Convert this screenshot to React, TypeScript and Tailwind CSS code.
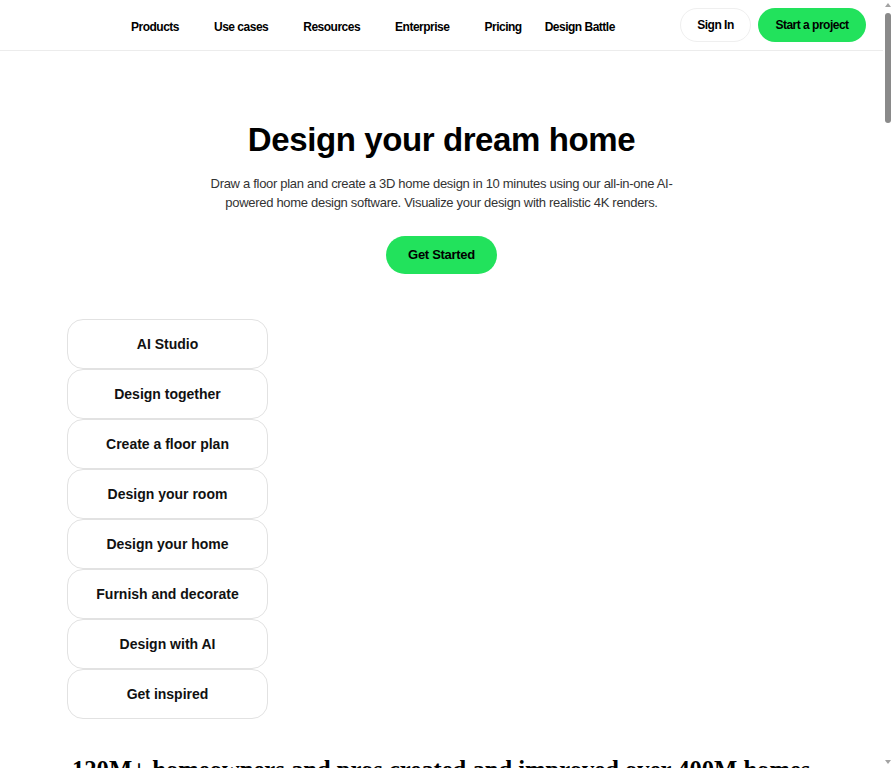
import React from 'react';

const navLinks = ['Products', 'Use cases', 'Resources', 'Enterprise', 'Pricing'];

const features = [
  'AI Studio',
  'Design together',
  'Create a floor plan',
  'Design your room',
  'Design your home',
  'Furnish and decorate',
  'Design with AI',
  'Get inspired',
];

const Header: React.FC = () => (
  <header className="h-[51px] border-b border-[#ececec] flex items-center pl-[131px] pr-[17px]">
    <nav className="mt-[3px] flex items-center gap-[35px] whitespace-nowrap text-[12px] font-bold tracking-[-0.5px] text-black">
      {navLinks.map((name) => (
        <a key={name} href="#">
          {name}
        </a>
      ))}
      <a href="#" className="-ml-[12px]">Design Battle</a>
    </nav>
    <div className="ml-auto flex items-center gap-[7px] text-[12px] font-bold tracking-[-0.5px] text-black">
      <button className="h-[34px] w-[71px] rounded-full border border-[#efefef] bg-white">
        Sign In
      </button>
      <button className="h-[34px] w-[108px] rounded-full bg-[#22e25c]">
        Start a project
      </button>
    </div>
  </header>
);

// thin page scrollbar on the right edge
const ScrollRail: React.FC = () => (
  <div className="fixed right-0 top-0 h-full w-[10px] bg-white">
    <div className="mx-auto mt-[3px] h-0 w-0 border-x-[3px] border-b-[4px] border-x-transparent border-b-[#a3a3a3]" />
    <div className="mx-auto mt-[6px] h-[110px] w-[6px] rounded-full bg-[#8a8a8a]" />
    <div className="absolute bottom-[4px] left-1/2 h-0 w-0 -translate-x-1/2 border-x-[3px] border-t-[4px] border-x-transparent border-t-[#a3a3a3]" />
  </div>
);

const App: React.FC = () => {
  return (
    <div className="min-h-[1200px] bg-white pr-[10px] text-black" style={{ fontFamily: '"Liberation Sans", Arial, sans-serif' }}>
      <Header />
      <main>
        <section className="flex flex-col items-center pt-[68px] text-center">
          <h1 className="text-[33px] font-bold leading-[42px] tracking-[-0.4px]">Design your dream home</h1>
          <p className="mt-[13px] w-[466px] text-[13px] leading-[19px] tracking-[-0.3px] text-[#333]">
            Draw a floor plan and create a 3D home design in 10 minutes using our all-in-one AI-powered home design
            software. Visualize your design with realistic 4K renders.
          </p>
          <button className="mt-[24px] h-[38px] w-[111px] rounded-full bg-[#22e25c] text-[13px] font-bold tracking-[-0.3px]">
            Get Started
          </button>
        </section>

        <section className="pl-[67px] pt-[45px]">
          <ul className="flex w-[201px] flex-col">
            {features.map((item) => (
              <li key={item}>
                <button className="h-[50px] w-full rounded-[16px] border border-[#e2e2e2] bg-white text-[14px] font-bold text-[#111]">
                  {item}
                </button>
              </li>
            ))}
          </ul>
        </section>

        <section className="pl-[72px] pt-[35px]">
          <h2 className="text-[24.6px] font-bold leading-[32px]" style={{ fontFamily: '"Liberation Serif", "Times New Roman", serif' }}>
            120M+ homeowners and pros created and improved over 400M homes
          </h2>
        </section>
      </main>
      <ScrollRail />
    </div>
  );
};

export default App;
